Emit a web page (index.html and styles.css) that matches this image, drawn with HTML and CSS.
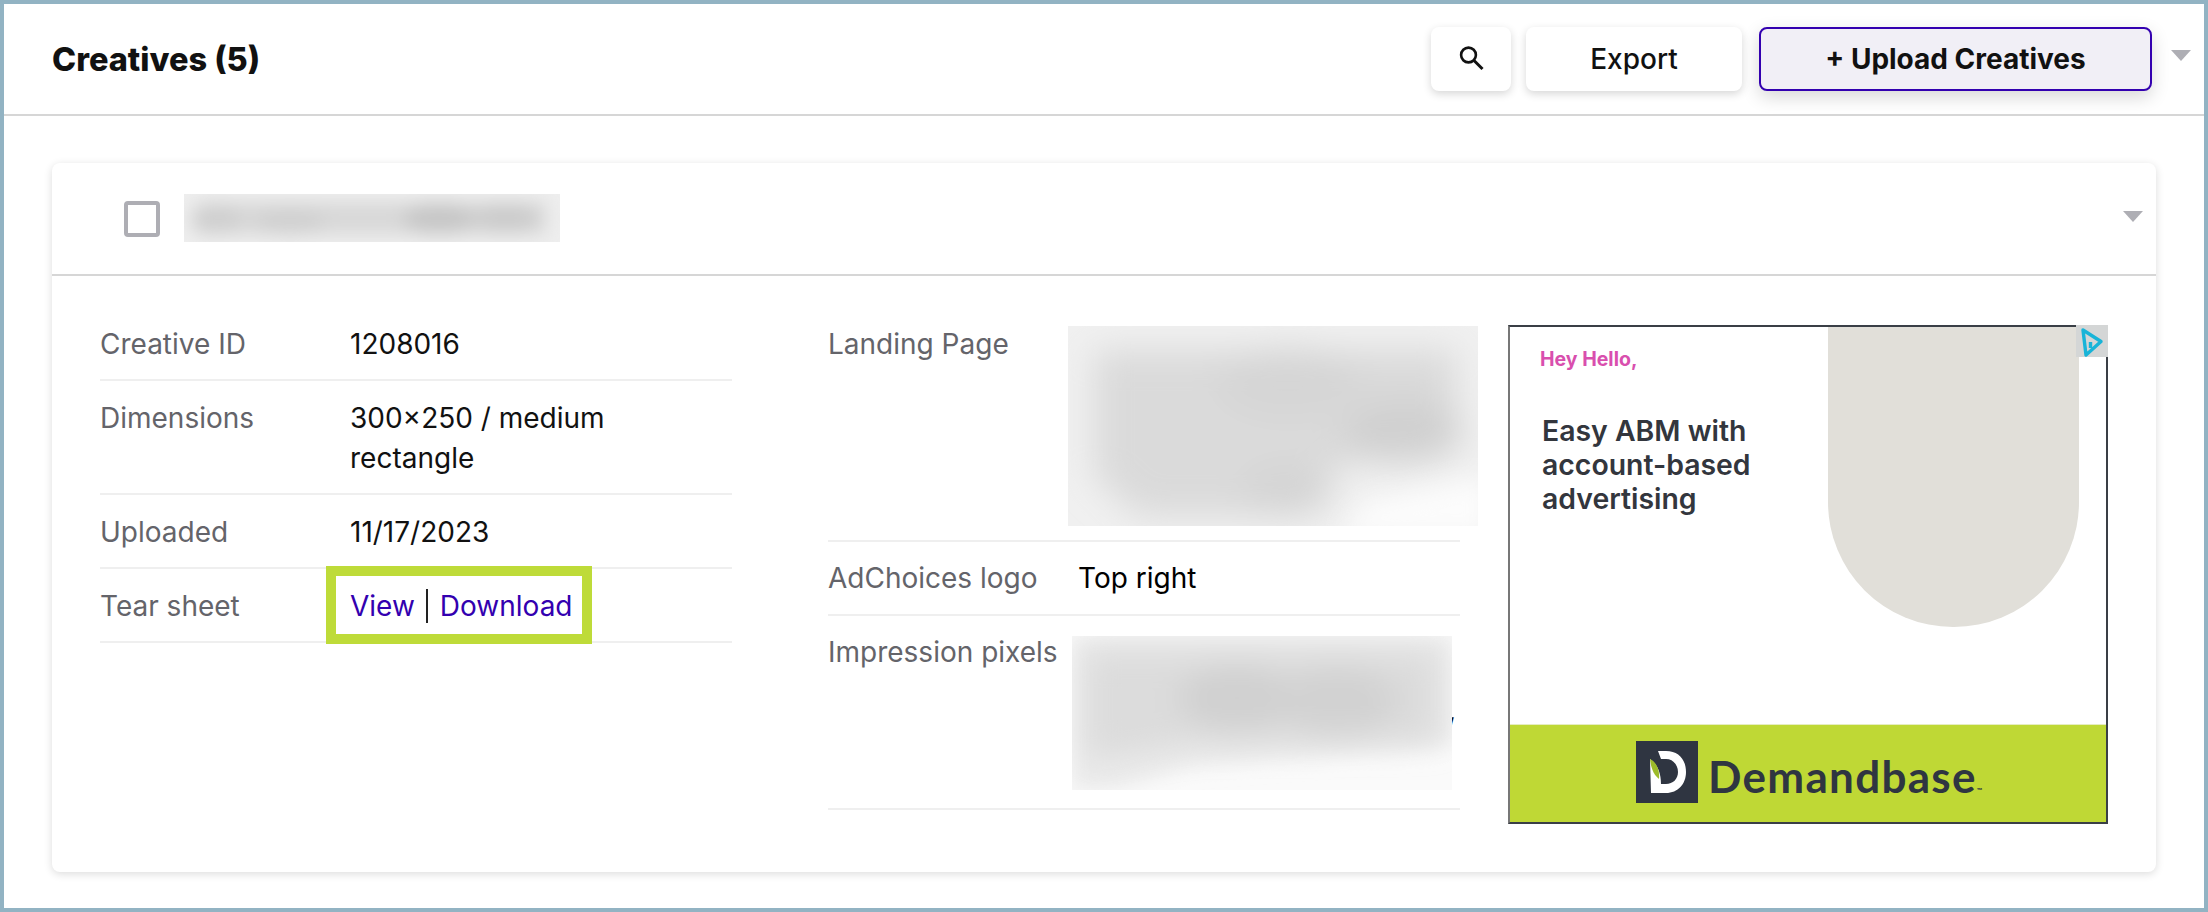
FILE: index.html
```html
<!DOCTYPE html>
<html lang="en">
<head>
<meta charset="utf-8">
<title>Creatives</title>
<link rel="stylesheet" href="styles.css">
</head>
<body>
<div class="frame">
  <header class="topbar">
    <h1 class="title">Creatives (5)</h1>
    <div class="actions">
      <button class="btn btn-icon" aria-label="Search">
        <svg width="28" height="28" viewBox="0 0 28 28" fill="none" stroke="#111" stroke-width="2.6"><circle cx="11.5" cy="10" r="7.4"/><path d="M17 15.5l8.5 8.5" stroke-width="3"/></svg>
      </button>
      <button class="btn btn-export">Export</button>
      <button class="btn btn-upload">+ Upload Creatives</button>
      <span class="caret caret-top"></span>
    </div>
  </header>
  <main class="content">
    <section class="card">
      <div class="card-head">
        <span class="checkbox"></span>
        <svg class="blur blur-name" width="376" height="48" viewBox="0 0 376 48"><rect width="376" height="48" fill="#eeeeee"/><g filter="url(#b1)"><rect x="12" y="8" width="350" height="32" fill="#d8d8d8"/><ellipse cx="32" cy="26" rx="26" ry="14" fill="#cfcfcf"/><ellipse cx="106" cy="28" rx="36" ry="13" fill="#d0d0d0"/><ellipse cx="255" cy="25" rx="36" ry="15" fill="#c6c6c6"/><ellipse cx="322" cy="24" rx="32" ry="14" fill="#cbcbcb"/></g><defs><filter id="b1" x="-10%" y="-80%" width="120%" height="260%"><feGaussianBlur stdDeviation="9"/></filter></defs></svg>
        <span class="caret caret-card"></span>
      </div>
      <div class="card-body">
        <div class="col col-left">
          <div class="row"><span class="label">Creative ID</span><span class="value">1208016</span></div>
          <div class="row"><span class="label">Dimensions</span><span class="value value-wrap">300×250 / medium rectangle</span></div>
          <div class="row"><span class="label">Uploaded</span><span class="value">11/17/2023</span></div>
          <div class="row"><span class="label">Tear sheet</span>
            <span class="value links"><span class="callout"></span><a href="#">View</a><span class="sep"></span><a href="#">Download</a></span>
          </div>
        </div>
        <div class="col col-mid">
          <div class="row row-first"><span class="label">Landing Page</span>
            <svg class="blur blur-land" width="410" height="200" viewBox="0 0 410 200"><rect width="410" height="200" fill="#f0f0f0"/><g filter="url(#b2)"><path d="M26 24H388V125L270 140L235 190H70L26 150Z" fill="#dadada"/><ellipse cx="335" cy="105" rx="60" ry="32" fill="#d0d0d0"/><ellipse cx="220" cy="55" rx="70" ry="34" fill="#d5d5d5"/><ellipse cx="220" cy="165" rx="45" ry="24" fill="#d4d4d4"/></g><path d="M270 210L300 175L420 150V210Z" fill="#fcfcfc" filter="url(#b3)"/><defs><filter id="b2" x="-15%" y="-20%" width="130%" height="140%"><feGaussianBlur stdDeviation="17"/></filter><filter id="b3" x="-30%" y="-50%" width="160%" height="200%"><feGaussianBlur stdDeviation="12"/></filter></defs></svg>
          </div>
          <div class="row"><span class="label">AdChoices logo</span><span class="value value-mid">Top right</span></div>
          <div class="row"><span class="label">Impression pixels</span>
            <svg class="blur blur-pix" width="380" height="154" viewBox="0 0 380 154"><rect width="380" height="154" fill="#fafafa"/><path d="M0 0H380V110L120 130L40 154H0Z" fill="#eaeaea" filter="url(#b5)"/><g filter="url(#b4)"><path d="M14 16H366V105L120 108L30 122H14Z" fill="#dcdcdc"/><ellipse cx="165" cy="62" rx="58" ry="32" fill="#d0d0d0"/><ellipse cx="265" cy="65" rx="60" ry="34" fill="#d2d2d2"/></g><defs><filter id="b4" x="-10%" y="-25%" width="120%" height="150%"><feGaussianBlur stdDeviation="15"/></filter><filter id="b5" x="-10%" y="-25%" width="120%" height="150%"><feGaussianBlur stdDeviation="10"/></filter></defs></svg>
            <span class="stray">,</span>
          </div>
        </div>
        <div class="ad">
          <div class="ad-top">
            <div class="ad-copy">
              <p class="ad-hey">Hey Hello,</p>
              <p class="ad-headline">Easy ABM with<br>account-based<br>advertising</p>
            </div>
            <div class="ad-shape"></div>
            <div class="adchoices">
              <svg width="24" height="32" viewBox="0 0 24 32" fill="none" stroke="#18b4d8" stroke-width="3.4" stroke-linejoin="round"><path d="M3 3L21 14.5L6 28Z"/><path d="M10.5 15v6"/></svg>
            </div>
          </div>
          <div class="ad-foot">
            <svg class="ad-logo" width="62" height="62" viewBox="0 0 62 62"><rect width="62" height="62" fill="#2f3541"/><path d="M22 10H30C43 10 50 19 50 31C50 43 42 52 30 52H15L14 18C20 22 25 30 25 43H30C37 43 42 38 42 31C42 24 37 18 30 18H25Z" fill="#fff"/><path d="M14 18C20 21 24 28 23 38C18 34 15 28 14 18Z" fill="#9dbb2a"/></svg>
            <span class="ad-brand">Demandbase<span class="ad-tm">™</span></span>
          </div>
        </div>
      </div>
    </section>
  </main>
</div>
</body>
</html>
```
FILE: styles.css
```css
* { box-sizing: border-box; }
html, body { margin: 0; padding: 0; background: #fff; }
body { font-family: Inter, "Liberation Sans", sans-serif; color: #111; }

.frame {
  width: 2208px;
  height: 912px;
  border: 4px solid #92b3c3;
  display: flex;
  flex-direction: column;
  overflow: hidden;
}

.topbar {
  height: 112px;
  flex: none;
  border-bottom: 2px solid #d6d6d6;
  display: flex;
  align-items: center;
  justify-content: space-between;
  padding: 0 13px 0 48px;
}
.title {
  margin: 0;
  font-family: Inter, sans-serif;
  font-weight: 800;
  font-size: 32.5px;
  color: #111;
}
.actions { display: flex; align-items: center; margin-top: 0; }
.btn {
  height: 64px;
  border-radius: 8px;
  background: #fff;
  border: 0;
  font-family: Inter, sans-serif;
  font-size: 28px;
  color: #111;
  box-shadow: 0 3px 8px rgba(0,0,0,.16);
  padding: 0;
  display: flex;
  align-items: center;
  justify-content: center;
}
.btn-icon { width: 80px; margin-right: 15px; }
.btn-export { width: 216px; margin-right: 17px; font-weight: 500; }
.btn-upload {
  width: 393px;
  margin-right: 19px;
  background: #f1eff6;
  border: 2px solid #3300b0;
  font-weight: 700;
  box-shadow: 0 6px 18px rgba(0,0,0,.16);
}
.caret {
  display: block;
  width: 0;
  height: 0;
  border-left: 10px solid transparent;
  border-right: 10px solid transparent;
  border-top: 11px solid #aeaeb4;
}
.caret-top { margin-top: -8px; }

.content { flex: 1; padding: 47px 48px 0; }
.card {
  width: 2104px;
  height: 709px;
  background: #fff;
  border-radius: 8px;
  box-shadow: 0 2px 8px rgba(0,0,0,.14);
  display: flex;
  flex-direction: column;
}
.card-head {
  height: 113px;
  flex: none;
  border-bottom: 2px solid #d6d6d6;
  display: flex;
  align-items: center;
  padding: 0 13px 0 72px;
}
.checkbox {
  width: 36px;
  height: 36px;
  border: 4px solid #aeaeb4;
  border-radius: 4px;
  margin-right: 24px;
}
.blur { display: block; flex: none; }
.blur-name { margin-top: -2px; }
.caret-card { margin-left: auto; margin-top: -4px; }

.card-body {
  flex: 1;
  display: flex;
  align-items: flex-start;
  padding: 31px 0 0 48px;
  font-size: 28px;
  line-height: 40px;
}
.col { flex: none; }
.col-left { width: 632px; margin-right: 96px; }
.col-mid { width: 632px; margin-top: 17px; margin-right: 48px; }

.row {
  display: flex;
  align-items: flex-start;
  padding: 16px 0;
  border-bottom: 2px solid #efefef;
}
.col-left .row { padding: 17px 0 15px; }
.row-first { padding: 0 0 14px; }
.label { width: 250px; flex: none; color: #64646a; }
.value { color: #111; }
.value-wrap { width: 290px; }
.value-mid { margin-left: 0; color: #000; }
.blur-land { margin: 2px -28px 0 -10px; }
.blur-pix { margin: 4px 0 2px -6px; position: relative; z-index: 1; }
.stray { width: 4px; height: 40px; flex: none; margin: 58px 0 0 -4px; color: #111; }

.links { position: relative; display: flex; align-items: center; height: 40px; }
.links a { color: #3300b0; text-decoration: none; }
.sep { width: 2px; height: 34px; background: #222; margin: 0 12px 0 11px; }
.callout {
  position: absolute;
  left: -24px;
  top: -20px;
  width: 266px;
  height: 78px;
  border: 10px solid #bedb39;
}

.ad {
  width: 600px;
  height: 499px;
  flex: none;
  margin-top: 18px;
  border: 2px solid #3a3f46;
  border-left-color: #777;
  display: flex;
  flex-direction: column;
  position: relative;
}
.ad-top { flex: 1; position: relative; display: flex; overflow: visible; }
.ad-copy { padding: 20px 0 0 30px; }
.ad-hey {
  margin: 0;
  font-size: 19.5px;
  line-height: 24px;
  font-weight: 700;
  color: #d94fae;
}
.ad-headline {
  margin: 43px 0 0 2px;
  font-size: 28.4px;
  line-height: 34px;
  font-weight: 600;
  color: #33363d;
}
.ad-shape {
  position: absolute;
  left: 318px;
  top: 0;
  width: 251px;
  height: 300px;
  background: #e1dfd9;
  border-radius: 0 0 125px 125px;
}
.adchoices {
  position: absolute;
  right: -2px;
  top: -2px;
  width: 32px;
  height: 32px;
  background: #d4d6d6;
  display: flex;
  justify-content: center;
  padding-top: 2px;
}
.ad-foot {
  height: 98px;
  flex: none;
  background: #bfd835;
  display: flex;
  align-items: center;
  padding-left: 126px;
  border-top: 1px solid #e6edc0;
}
.ad-logo { display: block; margin-top: -4px; }
.ad-brand {
  margin: 4px 0 0 10px;
  font-family: Lato, sans-serif;
  font-weight: 700;
  font-size: 44px;
  line-height: 1;
  letter-spacing: 1.3px;
  color: #2f3541;
}
.ad-tm { font-size: 7px; letter-spacing: 0; }
```
